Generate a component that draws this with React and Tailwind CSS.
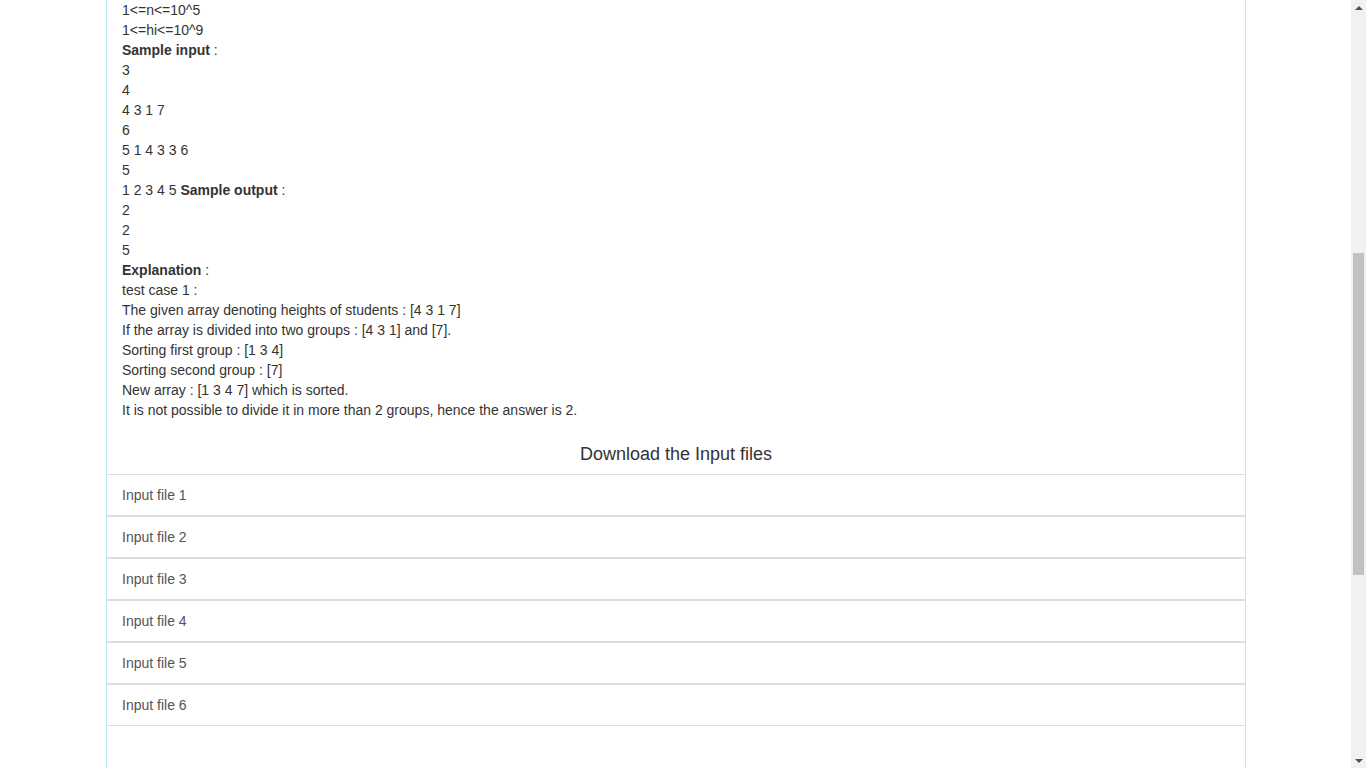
export default function App() {
  const lines = [
    "1<=n<=10^5",
    "1<=hi<=10^9",
    null,
    "3",
    "4",
    "4 3 1 7",
    "6",
    "5 1 4 3 3 6",
    "5",
    "out",
    "2",
    "2",
    "5",
    "expl",
    "test case 1 :",
    "The given array denoting heights of students : [4 3 1 7]",
    "If the array is divided into two groups : [4 3 1] and [7].",
    "Sorting first group : [1 3 4]",
    "Sorting second group : [7]",
    "New array : [1 3 4 7] which is sorted.",
    "It is not possible to divide it in more than 2 groups, hence the answer is 2.",
  ];
  const files = [1, 2, 3, 4, 5, 6];
  return (
    <div className="flex h-[768px] w-[1366px] overflow-hidden bg-white font-['Liberation_Sans',Arial,sans-serif] text-[14px] leading-[20px] text-[#333]">
      <div className="flex-1 pl-[106px]">
        <div className="flex h-full w-[1140px] flex-col border-x border-[#bce8f1]">
          <div className="px-[15px]">
            {lines.map((l, i) => {
              if (l === null)
                return (
                  <div key={i}>
                    <b>Sample input</b> :
                  </div>
                );
              if (l === "out")
                return (
                  <div key={i}>
                    1 2 3 4 5 <b>Sample output</b> :
                  </div>
                );
              if (l === "expl")
                return (
                  <div key={i}>
                    <b>Explanation</b> :
                  </div>
                );
              return <div key={i}>{l}</div>;
            })}
          </div>
          <div className="mt-[14px] pb-[10px] pt-[10px] text-center text-[18px] leading-[20px] text-[#333]">
            Download the Input files
          </div>
          <div className="flex flex-col">
            {files.map((n) => (
              <div
                key={n}
                className="border-y border-[#ddd] px-[15px] py-[10px] text-[#555]"
              >
                Input file {n}
              </div>
            ))}
          </div>
          <div className="flex-1" />
        </div>
      </div>
      <div className="flex w-[15px] flex-col bg-[#f1f1f1]">
        <div className="flex h-[15px] items-center justify-center">
          <svg width="8" height="4" viewBox="0 0 8 4">
            <polygon points="0,4 8,4 4,0" fill="#505050" />
          </svg>
        </div>
        <div className="mx-[2px] mt-[238px] h-[322px] bg-[#c1c1c1]" />
        <div className="flex-1" />
        <div className="flex h-[15px] items-center justify-center">
          <svg width="8" height="4" viewBox="0 0 8 4">
            <polygon points="0,0 8,0 4,4" fill="#505050" />
          </svg>
        </div>
      </div>
    </div>
  );
}
